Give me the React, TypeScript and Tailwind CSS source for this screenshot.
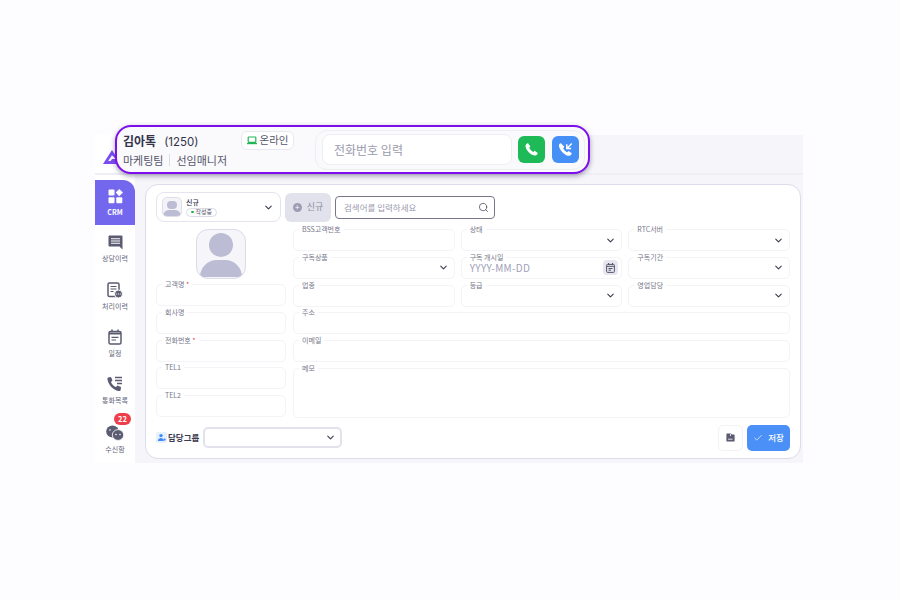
import React from "react";
import { ChevronDown, Search, Check } from "lucide-react";

const font = { fontFamily: '"Noto Sans CJK KR", Inter, sans-serif' };

const Chev = () => (
  <ChevronDown className="w-[11px] h-[11px] text-[#3c3c50]" strokeWidth={2.4} />
);

function Field({ label, req, chev, h = "h-[22px]", cls = "", children }: { label: string; req?: boolean; chev?: boolean; h?: string; cls?: string; children?: React.ReactNode }) {
  return (
    <div className={`relative ${h} rounded-[5px] border border-[#f3f3f8] bg-white flex items-center justify-end pr-[5px] ${cls}`}>
      <span className="absolute left-[5px] top-[-6px] bg-white px-[3px] text-[7px] leading-[10px] text-[#77778a] whitespace-nowrap">
        {label}
        {req && <span className="text-[#e5484d]"> *</span>}
      </span>
      {children}
      {chev && <Chev />}
    </div>
  );
}

function Nav({ label, children, active, badge }: { label: string; children: React.ReactNode; active?: boolean; badge?: string }) {
  return (
    <div className={`relative ${active ? "h-[45px] bg-[#7367ee] rounded-tr-[12px] text-white" : "h-[47.4px] text-[#66667c]"} flex flex-col items-center justify-center gap-[3px]`}>
      {children}
      <span className={`text-[7px] leading-[10px] ${active ? "font-bold text-white" : "text-[#66667c]"}`}>{label}</span>
      {badge && (
        <span className="absolute top-[-2px] left-[19px] min-w-[17px] h-[12px] px-[2px] rounded-full bg-[#ef3e4a] text-white text-[7.5px] leading-[12px] font-bold text-center">{badge}</span>
      )}
    </div>
  );
}

export default function App() {
  return (
    <div className="relative w-[900px] h-[600px] bg-[#fdfcfe] overflow-hidden pt-[135px] pl-[95px]" style={font}>
      <div className="w-[708px] h-[328px] bg-[#f5f5fa] flex flex-col">
        <div className="h-[40px] border-b-2 border-[#eeeef4] shrink-0 flex">
          <div className="w-[40px] h-full bg-white flex items-end justify-start pl-[8px] pb-[9px] shrink-0">
            <svg width="18" height="14" viewBox="0 0 18 14">
              <path d="M9 0 L18 14 H0 Z M9 5.2 L5.2 11 H7.6 L9 9 H13 Z" fillRule="evenodd" fill="#7a4cf2" />
            </svg>
          </div>
        </div>
        <div className="flex-1 flex min-h-0">
          <div className="w-[40px] bg-white shrink-0 pt-[5px] flex flex-col">
            <Nav label="CRM" active>
              <svg width="15" height="15" viewBox="0 0 15 15" fill="#fff">
                <rect x="0.5" y="0.5" width="6" height="6" rx="1" />
                <path d="M11.2 0 L15 3.6 L11.2 7.2 L7.8 3.6 Z" />
                <rect x="0.5" y="8.3" width="6" height="6" rx="1" />
                <rect x="8.3" y="8.3" width="6" height="6" rx="1" />
              </svg>
            </Nav>
            <Nav label="상담이력">
              <svg width="15" height="15" viewBox="0 0 15 15">
                <path fill="#5b5b72" d="M1.5 0.5 H13.5 A1 1 0 0 1 14.5 1.5 V14.5 L11.5 11.5 H1.5 A1 1 0 0 1 0.5 10.5 V1.5 A1 1 0 0 1 1.5 .5 Z" />
                <path stroke="#fff" strokeWidth="1.1" d="M3 3.7 H12 M3 6 H12 M3 8.3 H12" />
              </svg>
            </Nav>
            <Nav label="처리이력">
              <svg width="16" height="16" viewBox="0 0 16 16">
                <rect x="1" y="1" width="11" height="13.5" rx="1.5" fill="none" stroke="#5b5b72" strokeWidth="1.5" />
                <path stroke="#5b5b72" strokeWidth="1.2" d="M3.5 4.5 H9.5 M3.5 7 H9.5 M3.5 9.5 H6.5" />
                <circle cx="11.5" cy="12" r="4" fill="#5b5b72" stroke="#fff" />
                <path stroke="#fff" strokeWidth="1" strokeDasharray="1 .8" d="M9.2 12 H13.8" />
              </svg>
            </Nav>
            <Nav label="일정">
              <svg width="14" height="16" viewBox="0 0 14 16">
                <rect x="1" y="2.5" width="12" height="12.5" rx="1.5" fill="none" stroke="#5b5b72" strokeWidth="1.5" />
                <path stroke="#5b5b72" strokeWidth="2" d="M1 4.5 H13" />
                <path stroke="#5b5b72" strokeWidth="1.5" d="M4 0.5 V3 M10 0.5 V3" />
                <path stroke="#5b5b72" strokeWidth="1.2" d="M3.5 8.3 H10.5 M3.5 11 H8" />
              </svg>
            </Nav>
            <Nav label="통화목록">
              <svg width="16" height="16" viewBox="0 0 16 16">
                <path fill="#5b5b72" d="M1 1.5 L4 1 L5.5 4.5 L4 6 C5 8.5 6.5 10 9 11 L10.5 9.5 L14 11 L13.7 14 C13.5 15 12.5 15.2 11.5 15 C6 14 1.5 9 .5 3.5 C.4 2.5.5 1.7 1 1.5 Z" />
                <path stroke="#5b5b72" strokeWidth="1.3" d="M8 1.5 H15 M8 4.5 H15 M10 7.5 H15" />
              </svg>
            </Nav>
            <Nav label="수신함" badge="22">
              <svg width="18" height="16" viewBox="0 0 18 16" className="mt-[3px]">
                <ellipse cx="6.5" cy="6.5" rx="6.3" ry="6" fill="#5b5b72" />
                <ellipse cx="12" cy="10" rx="5.7" ry="5.4" fill="#5b5b72" stroke="#fff" strokeWidth="0.8" />
                <circle cx="4" cy="5" r=".8" fill="#fff" />
                <circle cx="10" cy="9.5" r=".8" fill="#fff" />
                <circle cx="14" cy="9.5" r=".8" fill="#fff" />
              </svg>
            </Nav>
          </div>
          <div className="flex-1 pl-[10px] pr-[2px] pt-[9px] min-w-0">
            <div className="h-[275px] rounded-[13px] border border-[#dcdcea] bg-white pl-[10px] pr-[10px] pt-[7px] flex flex-col">
              {/* top row */}
              <div className="flex items-center h-[30px] shrink-0">
                <div className="w-[125px] h-[30px] rounded-[8px] border border-[#e4e4ee] flex items-center pl-[5px] pr-[6px]">
                  <div className="w-[20px] h-[20px] rounded-[5px] border border-[#dedee8] bg-[#f3f3f8] overflow-hidden flex flex-col items-center pt-[3px] shrink-0">
                    <div className="w-[10px] h-[10px] rounded-full bg-[#bcbcd4]" />
                    <div className="w-[18px] h-[8px] rounded-t-full bg-[#bcbcd4] mt-[1px]" />
                  </div>
                  <div className="ml-[4px] flex-1 flex flex-col gap-[1px]">
                    <span className="text-[7px] leading-[9px] text-[#33334a] font-medium">신규</span>
                    <span className="self-start h-[9px] rounded-full border border-[#dcdce6] px-[4px] flex items-center gap-[2px] text-[6px] leading-[8px] text-[#55556a]">
                      <span className="w-[2.5px] h-[2.5px] rounded-full bg-[#22b455]" />작성중
                    </span>
                  </div>
                  <Chev />
                </div>
                <div className="ml-[4px] w-[46px] h-[29px] rounded-[6px] bg-[#e2e2ec] flex items-center justify-center gap-[5px] text-[9px] text-[#8c8ca4]">
                  <span className="w-[9px] h-[9px] rounded-full bg-[#9c9cb4] flex items-center justify-center text-white text-[8px] leading-none">+</span>
                  신규
                </div>
                <div className="ml-[4px] w-[160px] h-[23px] rounded-[4px] border border-[#77778a] flex items-center pl-[8px] pr-[5px] justify-between">
                  <span className="text-[8.5px] text-[#9a9aae]">검색어를 입력하세요</span>
                  <Search className="w-[11px] h-[11px] text-[#44445a]" strokeWidth={1.6} />
                </div>
              </div>
              {/* body */}
              <div className="flex mt-[7px]">
                <div className="w-[130px] shrink-0 flex flex-col">
                  <div className="self-center ml-[-1px] w-[50px] h-[50px] rounded-[12px] border border-[#dcdce8] bg-[#f5f5fa] overflow-hidden flex flex-col items-center pt-[3px]">
                    <div className="w-[24px] h-[24px] rounded-full bg-[#bcbcd4]" />
                    <div className="w-[42px] h-[17px] rounded-t-full bg-[#bcbcd4] mt-[3px]" />
                  </div>
                  <div className="flex flex-col gap-[5.75px] mt-[5px]">
                    <Field label="고객명" req />
                    <Field label="회사명" />
                    <Field label="전화번호" req />
                    <Field label="TEL1" />
                    <Field label="TEL2" />
                  </div>
                </div>
                <div className="ml-[7px] flex-1 flex flex-col gap-[5.75px]">
                  <div className="grid grid-cols-3 gap-x-[6px] gap-y-[5.75px]">
                    <Field label="BSS고객번호" />
                    <Field label="상태" chev />
                    <Field label="RTC서버" chev />
                    <Field label="구독상품" chev />
                    <Field label="구독 개시일" cls="!justify-between pl-[8px] !pr-[3px]">
                      <span className="text-[10px] text-[#a0a0b8] tracking-[0.3px] leading-none mt-[1px]">YYYY-MM-DD</span>
                      <span className="w-[15px] h-[15px] rounded-[4px] bg-[#e6e6f0] flex items-center justify-center">
                        <svg width="9" height="10" viewBox="0 0 9 10">
                          <rect x=".6" y="1.4" width="7.8" height="8" rx="1" fill="none" stroke="#55556a" />
                          <path stroke="#55556a" d="M.6 3.3 H8.4 M2.5 0 V2 M6.5 0 V2 M2.5 5.5 H6.5 M2.5 7.2 H5" />
                        </svg>
                      </span>
                    </Field>
                    <Field label="구독기간" chev />
                    <Field label="업종" />
                    <Field label="등급" chev />
                    <Field label="영업담당" chev />
                  </div>
                  <Field label="주소" />
                  <Field label="이메일" />
                  <Field label="메모" h="h-[50px]" />
                </div>
              </div>
              {/* bottom */}
              <div className="flex items-center mt-[7px]">
                <svg width="11" height="11" viewBox="0 0 11 11" className="shrink-0">
                  <rect width="11" height="11" rx="2" fill="#e6f0ff" />
                  <circle cx="5" cy="3.6" r="1.7" fill="#3d8bf5" />
                  <path d="M1.8 9 C2 6.8 3.5 6 5 6 C6.5 6 7.5 6.8 7.8 9 Z" fill="#3d8bf5" />
                  <circle cx="8.6" cy="7.6" r="1.1" fill="#3d8bf5" />
                </svg>
                <span className="ml-[1px] text-[8.5px] font-bold text-[#3c3c50]">담당그룹</span>
                <div className="ml-[4px] w-[139px] h-[21px] rounded-[5px] border-2 border-[#e2e2ec] flex items-center justify-end pr-[4px]">
                  <Chev />
                </div>
                <div className="ml-auto w-[25px] h-[26px] rounded-[5px] border border-[#f2f2f6] flex items-center justify-center">
                  <svg width="9" height="9" viewBox="0 0 9 9">
                    <path fill="#5b5b72" d="M1 .5 H5 L6 1.5 H8 A.6 .6 0 0 1 8.6 2 V8 A.6 .6 0 0 1 8 8.6 H1 A.6 .6 0 0 1 .4 8 V1 A.6 .6 0 0 1 1 .5 Z" />
                    <path stroke="#fff" strokeWidth=".8" d="M2 6.2 H6.5 M4.5 .8 V3" />
                  </svg>
                </div>
                <div className="ml-[4px] w-[43px] h-[26px] rounded-[5px] bg-[#4a90f6] flex items-center justify-center gap-[5px] text-white text-[8.5px] font-medium">
                  <Check className="w-[10px] h-[10px]" strokeWidth={1.6} />
                  저장
                </div>
              </div>
            </div>
          </div>
        </div>
      </div>

      {/* highlighted overlay */}
      <div className="absolute left-[115px] top-[125px] w-[475px] h-[49px] rounded-[16px] border-2 border-[#7d0fec] bg-[#fafafc] shadow-[0_2px_5px_rgba(60,50,90,0.45)] flex items-center pl-[6px]">
        <div className="w-[172px] shrink-0 h-[40px] relative">
          <div className="flex items-baseline text-[#33334a] leading-[16px] mt-[3px]">
            <span className="text-[12px] font-bold">김아톡</span>
            <span className="ml-[8px] text-[11.5px]" style={{ fontFamily: "Inter, sans-serif" }}>(1250)</span>
          </div>
          <div className="flex items-center mt-[2px] text-[11px] leading-[16px] text-[#55556a]">
            <span>마케팅팀</span>
            <span className="w-px h-[12px] bg-[#dcdce4] mx-[6px]" />
            <span>선임매니저</span>
          </div>
          <div className="absolute left-[118px] top-[1px] h-[19px] w-[53px] rounded-[6px] border border-[#e8e8f0] bg-white flex items-center justify-center gap-[3px] text-[10.5px] text-[#55556a]">
            <svg width="10" height="9" viewBox="0 0 10 9">
              <rect x="1.2" y="1" width="7.6" height="5.4" rx=".6" fill="none" stroke="#22b455" strokeWidth="1.2" />
              <path stroke="#22b455" strokeWidth="1.2" d="M0 7.6 H10" />
            </svg>
            온라인
          </div>
        </div>
        <div className="ml-[20px] w-[270px] h-[40px] rounded-[12px] border border-[#eeeef3] flex items-center pl-[6px] gap-[6px]">
          <div className="w-[190px] h-[31px] rounded-[8px] border border-[#eeeef3] bg-white flex items-center pl-[11px] text-[12px] text-[#9a9aae]">전화번호 입력</div>
          <div className="w-[27px] h-[27px] rounded-[6px] bg-[#1dba57] flex items-center justify-center">
            <svg width="15" height="15" viewBox="0 0 24 24" fill="#fff"><path d="M6.6 2 C5.8 2 3 3 2.5 5.5 C2 8 3.5 12 7.5 16.3 C11.5 20.5 16 22 18.5 21.5 C21 21 22 18.5 22 17.5 L17 14 L14.8 15.8 C12.5 15 9.5 12 8.3 9.3 L10.2 7 Z" /></svg>
          </div>
          <div className="ml-[1px] w-[27px] h-[27px] rounded-[6px] bg-[#458ff7] flex items-center justify-center">
            <svg width="15" height="15" viewBox="0 0 24 24" fill="#fff">
              <path d="M4.6 2 C3.8 2 1.5 3 1.5 5.5 C1.5 8 3 12 7 16.3 C11 20.5 16 22.5 18.5 22 C21 21.5 22 19 22 18 L17 14.5 L14.8 16.3 C12.5 15.5 9.5 12.5 8.3 9.8 L10.2 7.5 Z" />
              <path d="M22 2.5 L15 9.5 M14 3.5 V10.5 H21" fill="none" stroke="#fff" strokeWidth="2.4" />
            </svg>
          </div>
        </div>
      </div>
    </div>
  );
}
